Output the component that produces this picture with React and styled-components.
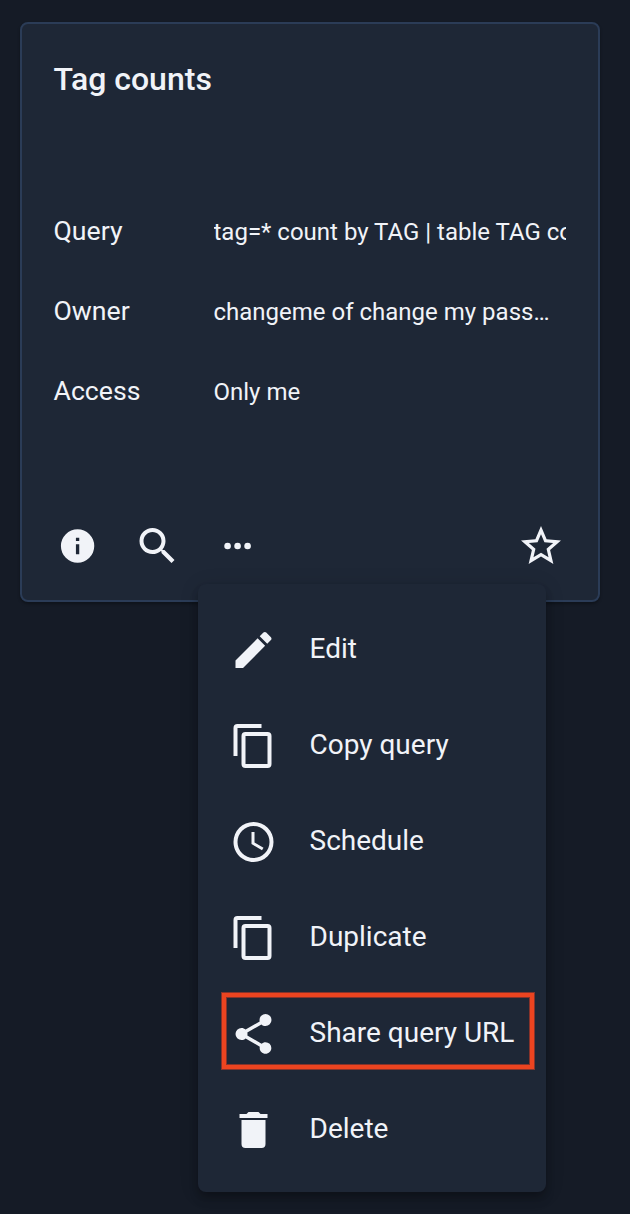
import React from "react";
import styled, { createGlobalStyle } from "styled-components";

const Global = createGlobalStyle`
  * { box-sizing: border-box; }
  body { margin: 0; background: #151b26; }
`;

const Page = styled.main`
  min-height: 1214px;
  padding: 22px 30px 0 20px;
  overflow: hidden;
  background: #151b26;
  color: #f1f3f8;
  font-family: Roboto, "Liberation Sans", sans-serif;
`;

const Card = styled.section`
  position: relative;
  display: flex;
  flex-direction: column;
  width: 580px;
  height: 580px;
  padding: 29px 32px 30px 31.5px;
  border: 2px solid #2b3c57;
  border-radius: 8px;
  background: #1e2736;
  box-shadow: 0 2px 3px rgba(0, 0, 0, 0.3);
`;

const Title = styled.h2`
  margin: 0;
  height: 110px;
  font-size: 32px;
  line-height: 52px;
  font-weight: 500;
`;

const Fields = styled.dl`
  margin: 0;
  padding-top: 28px;
`;

const Field = styled.div`
  display: flex;
  height: 80px;
  line-height: 80px;
`;

const Label = styled.dt`
  flex: 0 0 160px;
  font-size: 26.67px;
`;

const Value = styled.dd`
  flex: 1;
  min-width: 0;
  margin: 0;
  padding-top: 1px;
  font-size: 24px;
  white-space: nowrap;
  overflow: hidden;
  text-overflow: ${(p) => (p.$ellipsis ? "ellipsis" : "clip")};
`;

const Actions = styled.div`
  display: flex;
  align-items: center;
  height: 48px;
  margin-top: auto;
  padding-right: 1px;
`;

const IconButton = styled.button`
  display: flex;
  align-items: center;
  justify-content: center;
  width: ${(p) => (p.$end ? "48px" : "80px")};
  height: 48px;
  margin: 0 0 0 ${(p) => (p.$end ? "auto" : p.$first ? "-16px" : "0")};
  padding: 0;
  border: 0;
  background: none;
  color: inherit;
`;

const Svg = styled.svg`
  display: block;
  flex: none;
  fill: currentColor;
`;

const Menu = styled.ul`
  position: absolute;
  top: 560px;
  left: 176px;
  width: 348px;
  height: 608px;
  margin: 0;
  padding: 15px 12px 16px 24px;
  list-style: none;
  border-radius: 8px;
  background: #1e2736;
  box-shadow: 0 4px 8px -2px rgba(0, 0, 0, 0.2), 0 8px 10px rgba(0, 0, 0, 0.14),
    0 2px 20px rgba(0, 0, 0, 0.12);
`;

const Item = styled.li`
  display: flex;
  align-items: center;
  height: 76px;
  margin: 10px 0 20px;
  padding-left: 7.5px;
  font-size: 28px;
  ${(p) =>
    p.$marked &&
    `border: 4px solid #ec4420;
     padding-left: 3.5px;
     box-shadow: 0 0 0 1px #86332b, inset 0 0 0 1px #86332b;`}
`;

const ItemText = styled.span`
  margin: 4px 0 0 32px;
  line-height: 40px;
  white-space: nowrap;
`;

const paths = {
  info: "M13,9H11V7H13M13,17H11V11H13M12,2A10,10 0 0,0 2,12A10,10 0 0,0 12,22A10,10 0 0,0 22,12A10,10 0 0,0 12,2Z",
  search:
    "M9.5,3A6.5,6.5 0 0,1 16,9.5C16,11.11 15.41,12.59 14.44,13.73L14.71,14H15.5L20.5,19L19,20.5L14,15.5V14.71L13.73,14.44C12.59,15.41 11.11,16 9.5,16A6.5,6.5 0 0,1 3,9.5A6.5,6.5 0 0,1 9.5,3M9.5,5C7,5 5,7 5,9.5C5,12 7,14 9.5,14C12,14 14,12 14,9.5C14,7 12,5 9.5,5Z",
  more: "M16,12A2,2 0 0,1 18,10A2,2 0 0,1 20,12A2,2 0 0,1 18,14A2,2 0 0,1 16,12M10,12A2,2 0 0,1 12,10A2,2 0 0,1 14,12A2,2 0 0,1 12,14A2,2 0 0,1 10,12M4,12A2,2 0 0,1 6,10A2,2 0 0,1 8,12A2,2 0 0,1 6,14A2,2 0 0,1 4,12Z",
  star: "M12,15.39L8.24,17.66L9.23,13.38L5.91,10.5L10.29,10.13L12,6.09L13.71,10.13L18.09,10.5L14.77,13.38L15.76,17.66M22,9.24L14.81,8.63L12,2L9.19,8.63L2,9.24L7.45,13.97L5.82,21L12,17.27L18.18,21L16.54,13.97L22,9.24Z",
  edit: "M20.71,7.04C21.1,6.65 21.1,6 20.71,5.63L18.37,3.29C18,2.9 17.35,2.9 16.96,3.29L15.12,5.12L18.87,8.87M3,17.25V21H6.75L17.81,9.93L14.06,6.18L3,17.25Z",
  copy: "M19,21H8V7H19M19,5H8A2,2 0 0,0 6,7V21A2,2 0 0,0 8,23H19A2,2 0 0,0 21,21V7A2,2 0 0,0 19,5M16,1H4A2,2 0 0,0 2,3V17H4V3H16V1Z",
  clock:
    "M12,20A8,8 0 0,0 20,12A8,8 0 0,0 12,4A8,8 0 0,0 4,12A8,8 0 0,0 12,20M12,2A10,10 0 0,1 22,12A10,10 0 0,1 12,22C6.47,22 2,17.5 2,12A10,10 0 0,1 12,2M12.5,7V12.25L17,14.92L16.25,16.15L11,13V7H12.5Z",
  share:
    "M18,16.08C17.24,16.08 16.56,16.38 16.04,16.85L8.91,12.7C8.96,12.47 9,12.24 9,12C9,11.76 8.96,11.53 8.91,11.3L15.96,7.19C16.5,7.69 17.21,8 18,8A3,3 0 0,0 21,5A3,3 0 0,0 18,2A3,3 0 0,0 15,5C15,5.24 15.04,5.47 15.09,5.7L8.04,9.81C7.5,9.31 6.79,9 6,9A3,3 0 0,0 3,12A3,3 0 0,0 6,15C6.79,15 7.5,14.69 8.04,14.19L15.16,18.34C15.11,18.55 15.08,18.77 15.08,19C15.08,20.61 16.39,21.91 18,21.91C19.61,21.91 20.92,20.61 20.92,19A2.92,2.92 0 0,0 18,16.08Z",
  trash: "M19,4H15.5L14.5,3H9.5L8.5,4H5V6H19M6,19A2,2 0 0,0 8,21H16A2,2 0 0,0 18,19V7H6V19Z",
};

const MenuIcon = styled(Svg)`
  margin-top: 6px;
`;

function Icon({ name, size = 48, shift = 0.25, as: Shape = Svg }) {
  return (
    <Shape width={size} height={size} viewBox={`${shift} 0 24 24`} aria-hidden="true">
      <path d={paths[name]} />
    </Shape>
  );
}

const fields = [
  { label: "Query", value: "tag=* count by TAG | table TAG count" },
  { label: "Owner", value: "changeme of change my password", ellipsis: true },
  { label: "Access", value: "Only me" },
];

const items = [
  { icon: "edit", text: "Edit" },
  { icon: "copy", text: "Copy query" },
  { icon: "clock", text: "Schedule" },
  { icon: "copy", text: "Duplicate" },
  { icon: "share", text: "Share query URL", marked: true },
  { icon: "trash", text: "Delete" },
];

export default function App() {
  return (
    <Page>
      <Global />
      <Card>
        <Title>Tag counts</Title>
        <Fields>
          {fields.map((f) => (
            <Field key={f.label}>
              <Label>{f.label}</Label>
              <Value $ellipsis={f.ellipsis}>{f.value}</Value>
            </Field>
          ))}
        </Fields>
        <Actions>
          <IconButton $first aria-label="Details"><Icon name="info" size={40} /></IconButton>
          <IconButton aria-label="Search"><Icon name="search" /></IconButton>
          <IconButton aria-label="More"><Icon name="more" size={40} /></IconButton>
          <IconButton $end aria-label="Favorite"><Icon name="star" shift={0} /></IconButton>
        </Actions>
        <Menu>
          {items.map((item) => (
            <Item key={item.text} $marked={item.marked}>
              <Icon name={item.icon} as={MenuIcon} />
              <ItemText>{item.text}</ItemText>
            </Item>
          ))}
        </Menu>
      </Card>
    </Page>
  );
}
